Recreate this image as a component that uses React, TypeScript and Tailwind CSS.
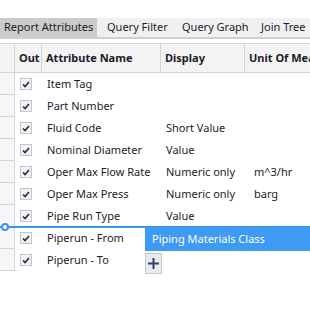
import { Fragment } from 'react'

const ROWS = [
  { name: 'Item Tag', display: '', unit: '' },
  { name: 'Part Number', display: '', unit: '' },
  { name: 'Fluid Code', display: 'Short Value', unit: '' },
  { name: 'Nominal Diameter', display: 'Value', unit: '' },
  { name: 'Oper Max Flow Rate', display: 'Numeric only', unit: 'm^3/hr' },
  { name: 'Oper Max Press', display: 'Numeric only', unit: 'barg' },
  { name: 'Pipe Run Type', display: 'Value', unit: '' },
  { name: 'Piperun - From', display: '', unit: '' },
  { name: 'Piperun - To', display: '', unit: '' },
]

const TABS = [
  { label: 'Report Attributes', cls: 'w-[97px] pl-[4px] bg-[#cbcbcb]' },
  { label: 'Query Filter', cls: 'w-[75px] pl-[10px]' },
  { label: 'Query Graph', cls: 'w-[79px] pl-[10px]' },
  { label: 'Join Tree', cls: 'flex-1 pl-[10px]' },
]

function Check() {
  return (
    <div className="w-[12px] h-[12px] border border-[#c5c5cc] bg-[#f3f3f5] flex items-center justify-center">
      <svg width="8" height="7" viewBox="0 0 8 7">
        <path d="M1 3.5 L3 5.5 L7 1" fill="none" stroke="#1e2a44" strokeWidth="1.6" />
      </svg>
    </div>
  )
}

export default function App() {
  return (
    <div className="w-[310px] h-[320px] bg-white overflow-hidden relative text-[11px] text-[#1b1b2b] font-['Noto_Sans',sans-serif]">
      <div className="h-[18px]" />
      <div className="h-[21px] flex bg-[#f0f0f0] border-b-2 border-[#cfcfcf] whitespace-nowrap overflow-hidden">
        {TABS.map((t) => (
          <div key={t.label} className={`h-full flex items-center shrink-0 ${t.cls}`}>
            {t.label}
          </div>
        ))}
      </div>
      <div className="h-[4px]" />
      <div className="grid grid-cols-[15px_27px_119px_84px_1fr] whitespace-nowrap">
        <div className="h-[30px] bg-[#f3f3f3] border-t border-b border-r border-[#d3d3e0]" />
        <div className="h-[30px] bg-[#f3f3f3] border-t border-b border-r border-[#d3d3e0] font-bold flex items-center pl-[4px]">Out</div>
        <div className="h-[30px] bg-[#f3f3f3] border-t border-b border-r border-[#d3d3e0] font-bold flex items-center pl-[4px]">Attribute Name</div>
        <div className="h-[30px] bg-[#f3f3f3] border-t border-b border-r border-[#d3d3e0] font-bold flex items-center pl-[4px]">Display</div>
        <div className="h-[30px] bg-[#f3f3f3] border-t border-b border-[#d3d3e0] font-bold flex items-center pl-[4px] overflow-hidden">Unit Of Measure</div>
        {ROWS.map((r) => (
          <Fragment key={r.name}>
            <div className="h-[22px] bg-[#f7f7f7] border-b border-r border-[#d3d3e0]" />
            <div className="h-[22px] flex items-center pl-[5px]">
              <Check />
            </div>
            <div className="h-[22px] flex items-center pl-[5px] pt-[1px]">{r.name}</div>
            <div className="h-[22px] flex items-center pl-[5px] pt-[1px]">{r.display}</div>
            <div className="h-[22px] flex items-center pl-[9px] pt-[1px]">{r.unit}</div>
          </Fragment>
        ))}
      </div>

      {/* drag insertion marker */}
      <div className="absolute left-0 top-[226px] w-[310px] h-[2px] bg-[#3b93ee]" />
      <div className="absolute left-[1px] top-[223px] w-[8px] h-[8px] rounded-full border-2 border-[#3b93ee] bg-white" />
      <div className="absolute left-[145px] top-[227px] w-[165px] h-[24px] bg-[#3d9bf5] text-white flex items-center pl-[7px] whitespace-nowrap">
        Piping Materials Class
      </div>
      <div className="absolute left-[145px] top-[253px] w-[17px] h-[21px] bg-[#e9e9ee] border border-[#c6c6d2] flex items-center justify-center">
        <svg width="13" height="13" viewBox="0 0 13 13">
          <path d="M6.5 1 V12 M1 6.5 H12" stroke="#34406a" strokeWidth="2" />
        </svg>
      </div>
    </div>
  )
}
